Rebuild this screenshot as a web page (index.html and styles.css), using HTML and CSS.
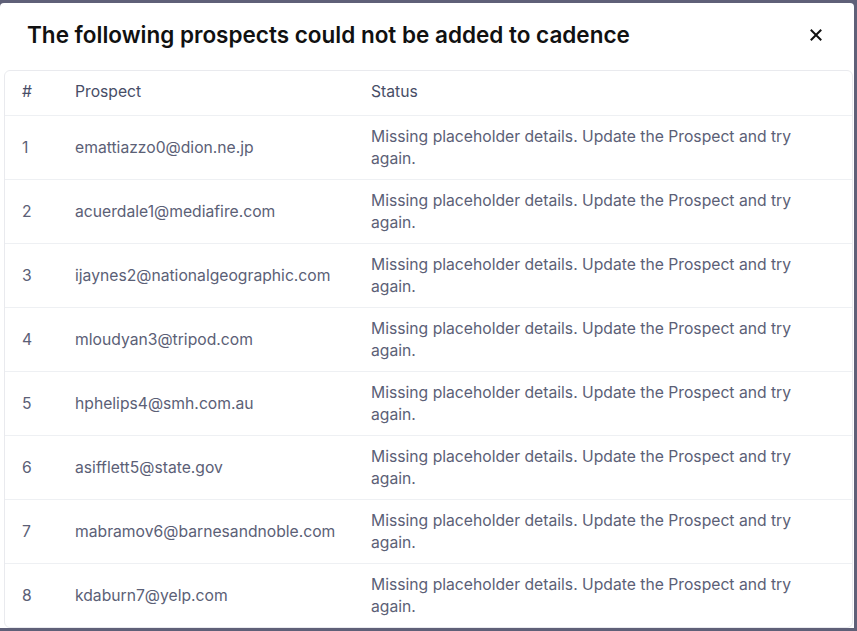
FILE: index.html
```html
<!DOCTYPE html>
<html lang="en">
<head>
<meta charset="utf-8">
<title>Prospects not added</title>
<link rel="stylesheet" href="styles.css">
</head>
<body>
<div class="modal">
  <div class="modal-header">
    <h2 class="modal-title">The following prospects could not be added to cadence</h2>
    <button class="close-btn" aria-label="Close">
      <svg width="12" height="12" viewBox="0 0 12 12"><path d="M1.5 1.5 L10.5 10.5 M10.5 1.5 L1.5 10.5" stroke="#111" stroke-width="2" stroke-linecap="square" fill="none"/></svg>
    </button>
  </div>
  <div class="modal-body">
    <div class="table">
      <div class="row head">
        <div class="cell">#</div>
        <div class="cell">Prospect</div>
        <div class="cell">Status</div>
      </div>
      <div class="row"><div class="cell">1</div><div class="cell">emattiazzo0@dion.ne.jp</div><div class="cell">Missing placeholder details. Update the Prospect and try again.</div></div>
      <div class="row"><div class="cell">2</div><div class="cell">acuerdale1@mediafire.com</div><div class="cell">Missing placeholder details. Update the Prospect and try again.</div></div>
      <div class="row"><div class="cell">3</div><div class="cell">ijaynes2@nationalgeographic.com</div><div class="cell">Missing placeholder details. Update the Prospect and try again.</div></div>
      <div class="row"><div class="cell">4</div><div class="cell">mloudyan3@tripod.com</div><div class="cell">Missing placeholder details. Update the Prospect and try again.</div></div>
      <div class="row"><div class="cell">5</div><div class="cell">hphelips4@smh.com.au</div><div class="cell">Missing placeholder details. Update the Prospect and try again.</div></div>
      <div class="row"><div class="cell">6</div><div class="cell">asifflett5@state.gov</div><div class="cell">Missing placeholder details. Update the Prospect and try again.</div></div>
      <div class="row"><div class="cell">7</div><div class="cell">mabramov6@barnesandnoble.com</div><div class="cell">Missing placeholder details. Update the Prospect and try again.</div></div>
      <div class="row"><div class="cell">8</div><div class="cell">kdaburn7@yelp.com</div><div class="cell">Missing placeholder details. Update the Prospect and try again.</div></div>
    </div>
  </div>
</div>
</body>
</html>
```
FILE: styles.css
```css
html, body {
  margin: 0;
  padding: 0;
  height: 100%;
  overflow: hidden;
}
body {
  background: #5f6078;
  font-family: Inter, "Noto Sans", sans-serif;
}
.modal {
  margin-top: 3px;
  width: 854px;
  height: 625px;
  background: #fff;
  border-radius: 4px 4px 0 0;
  display: flex;
  flex-direction: column;
  overflow: hidden;
}
.modal-header {
  flex: 0 0 63px;
  display: flex;
  align-items: center;
  justify-content: space-between;
  padding: 0 32px 0 27px;
}
.modal-title {
  margin: 0;
  font-size: 22.5px;
  font-weight: 600;
  color: #111;
}
.close-btn {
  border: 0;
  background: none;
  padding: 0;
  display: flex;
  cursor: pointer;
}
.modal-body {
  flex: 1;
  overflow-y: scroll;
  padding: 4px 1px 130px 4px;
}
.modal-body::-webkit-scrollbar {
  width: 8px;
}
.modal-body::-webkit-scrollbar-track {
  background: #f1f1f1;
}
.modal-body::-webkit-scrollbar-thumb {
  background: #c1c1c1;
}
.table {
  border: 1px solid #e9eaee;
  border-radius: 6px;
}
.row {
  display: grid;
  grid-template-columns: 53px 296px 1fr;
  align-items: center;
  height: 64px;
  border-top: 1px solid #eef0f3;
  box-sizing: border-box;
  font-size: 15.7px;
  line-height: 22px;
  color: #5b6076;
}
.row.head {
  height: 44px;
  padding-bottom: 2px;
  border-top: 0;
  color: #474d66;
}
.cell {
  padding: 0 17px;
}
.row .cell:last-child {
  padding-right: 30px;
}
```
